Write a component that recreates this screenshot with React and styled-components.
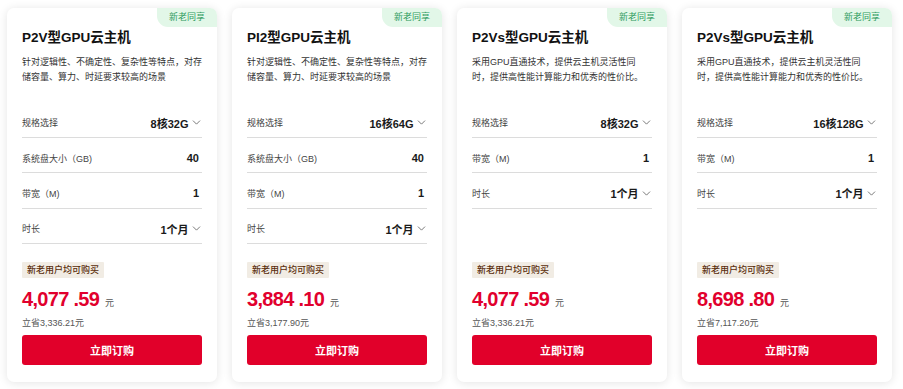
import styled, { createGlobalStyle } from "styled-components";
import { ChevronDown } from "lucide-react";

const GlobalStyle = createGlobalStyle`
  body {
    margin: 0;
    background: #ffffff;
    font-family: "Liberation Sans", Arial, "Noto Sans CJK SC", sans-serif;
    color: #222;
  }
`;

const Page = styled.div`
  display: grid;
  grid-template-columns: repeat(4, 210px);
  gap: 15px;
  padding: 8px 7px;
`;

const Card = styled.div`
  position: relative;
  height: 374px;
  box-sizing: border-box;
  padding: 20px 15px 17px;
  background: #fff;
  border-radius: 7px;
  box-shadow: 0 1px 10px rgba(0, 0, 0, 0.11);
  display: flex;
  flex-direction: column;
  overflow: hidden;
`;

const Badge = styled.div`
  position: absolute;
  top: 0;
  right: 0;
  width: 60px;
  height: 19px;
  line-height: 19px;
  text-align: center;
  font-size: 9px;
  color: #2f9b5e;
  background: #e2f7e8;
  border-bottom-left-radius: 11px;
`;

const Title = styled.div`
  font-size: 13.5px;
  font-weight: 700;
  line-height: 20px;
  color: #111;
`;

const Desc = styled.div`
  margin-top: 6.5px;
  height: 30px;
  font-size: 9px;
  line-height: 15px;
  color: #333;
  word-break: break-all;
`;

const Rows = styled.div`
  margin-top: 18px;
  flex: 1;
`;

const Row = styled.div`
  height: 35.4px;
  box-sizing: border-box;
  padding-top: 6px;
  display: flex;
  align-items: center;
  justify-content: space-between;
  border-bottom: 1px solid #dcdcdc;
`;

const Label = styled.span`
  font-size: 9px;
  color: #444;
`;

const Value = styled.span`
  display: flex;
  align-items: center;
  font-size: 11px;
  font-weight: 700;
  color: #1a1a1a;
  padding-right: ${(p) => (p.$select ? "0" : "3px")};

  svg {
    color: #666;
    margin-left: 1px;
    margin-right: -0.5px;
  }
`;

const Tag = styled.div`
  align-self: flex-start;
  height: 16px;
  line-height: 16px;
  padding: 0 5px;
  font-size: 9px;
  font-weight: 500;
  color: #5a2e0c;
  background: #f1ece4;
  border-radius: 1px;
`;

const PriceLine = styled.div`
  margin-top: 9.5px;
  display: flex;
  align-items: baseline;
  color: #e1002d;
  font-size: 20px;
  line-height: 24px;
  font-weight: 700;
  letter-spacing: -0.7px;
`;

const Unit = styled.span`
  margin-left: 6px;
  font-size: 9px;
  font-weight: 400;
  color: #555;
  letter-spacing: 0;
`;

const Save = styled.div`
  margin-top: 1px;
  font-size: 9px;
  line-height: 14px;
  color: #555;
`;

const BuyButton = styled.button`
  margin-top: 5px;
  height: 30px;
  border: none;
  border-radius: 3px;
  background: #e1002a;
  color: #fff;
  font-family: inherit;
  font-size: 11px;
  font-weight: 700;
  cursor: pointer;
`;

const descA = "针对逻辑性、不确定性、复杂性等特点，对存储容量、算力、时延要求较高的场景";
const descB = "采用GPU直通技术，提供云主机灵活性同时，提供高性能计算能力和优秀的性价比。";

const products = [
  {
    title: "P2V型GPU云主机",
    desc: descA,
    rows: [
      ["规格选择", "8核32G", true],
      ["系统盘大小（GB)", "40"],
      ["带宽（M)", "1"],
      ["时长", "1个月", true],
    ],
    price: "4,077 .59",
    save: "3,336.21",
  },
  {
    title: "PI2型GPU云主机",
    desc: descA,
    rows: [
      ["规格选择", "16核64G", true],
      ["系统盘大小（GB)", "40"],
      ["带宽（M)", "1"],
      ["时长", "1个月", true],
    ],
    price: "3,884 .10",
    save: "3,177.90",
  },
  {
    title: "P2Vs型GPU云主机",
    desc: descB,
    rows: [
      ["规格选择", "8核32G", true],
      ["带宽（M)", "1"],
      ["时长", "1个月", true],
    ],
    price: "4,077 .59",
    save: "3,336.21",
  },
  {
    title: "P2Vs型GPU云主机",
    desc: descB,
    rows: [
      ["规格选择", "16核128G", true],
      ["带宽（M)", "1"],
      ["时长", "1个月", true],
    ],
    price: "8,698 .80",
    save: "7,117.20",
  },
];

export default function App() {
  return (
    <>
      <GlobalStyle />
      <Page>
        {products.map((p, i) => (
          <Card key={i}>
            <Badge>新老同享</Badge>
            <Title>{p.title}</Title>
            <Desc>{p.desc}</Desc>
            <Rows>
              {p.rows.map(([label, value, select]) => (
                <Row key={label}>
                  <Label>{label}</Label>
                  <Value $select={select}>
                    {value}
                    {select && <ChevronDown size={13} strokeWidth={1.6} />}
                  </Value>
                </Row>
              ))}
            </Rows>
            <Tag>新老用户均可购买</Tag>
            <PriceLine>
              {p.price}
              <Unit>元</Unit>
            </PriceLine>
            <Save>立省{p.save}元</Save>
            <BuyButton>立即订购</BuyButton>
          </Card>
        ))}
      </Page>
    </>
  );
}
